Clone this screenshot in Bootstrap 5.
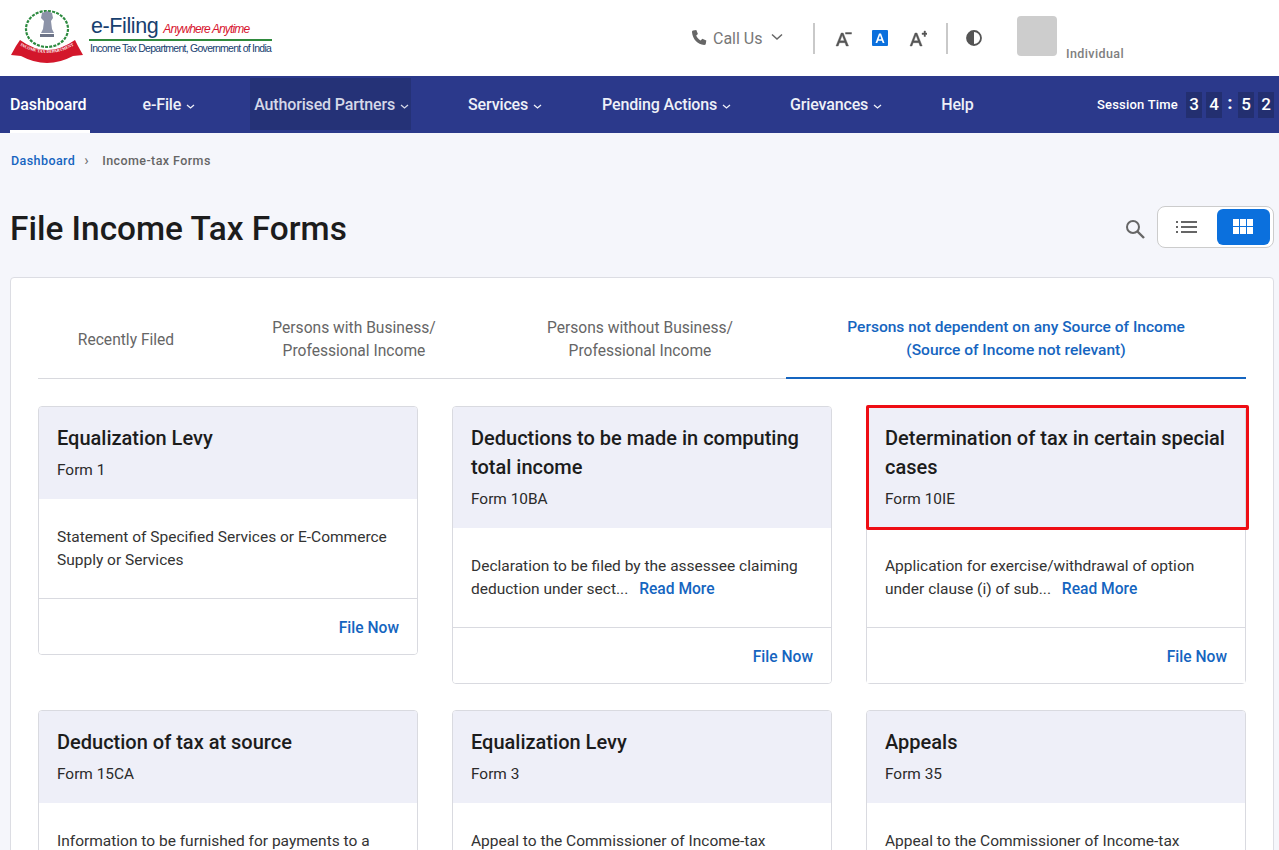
<!DOCTYPE html>
<html lang="en">
<head>
<meta charset="utf-8">
<title>File Income Tax Forms</title>
<link rel="stylesheet" href="https://cdn.jsdelivr.net/npm/bootstrap@5.3.0/dist/css/bootstrap.min.css">
<style>
html,body{height:850px;overflow:hidden}
body{background:#f5f6fb;font-family:Roboto,"Liberation Sans",sans-serif;color:#1c1c1c;font-size:15.5px}
.topbar{height:76px;background:#fff;padding-left:10px}
.logo-title{font-family:"Liberation Sans",sans-serif;line-height:1}
.logo-wrap{width:262px;height:60px}
.logo-text{width:183px;margin-left:6px;padding-top:8px}
.logo-efile{font-size:21.5px;color:#17406f;letter-spacing:-.4px;margin-left:2px}
.logo-any{font-size:12px;font-style:italic;color:#d7142e;letter-spacing:-.85px;margin-left:5px}
.logo-rule{height:2px;background:#2f8a3d;margin-top:1px}
.logo-dept{font-size:10.5px;color:#17406f;letter-spacing:-.74px;margin-top:2px;margin-left:1px;white-space:nowrap}
.tools{margin-left:auto;height:76px;color:#666}
.callus{width:122px;color:#777;font-size:16px}
.callus span{margin:2px 8px 0 5px;line-height:20px}
.callus svg:last-child{margin-top:-3px}
.vsep{width:2px;height:31px;background:#c9c9c9}
.avatar-box{width:40px;height:40px;background:#cdcdcd;border-radius:4px;margin:0 0 4px 35px}
.role{font-size:12.5px;font-weight:500;color:#808080;letter-spacing:.4px;margin:33px 0 0 9px;width:213px}
.mainnav{height:57px;background:#2b398b;flex-wrap:nowrap}
.mainnav.navbar-expand .navbar-nav .nav-link{color:#eef0f8;font-weight:500;font-size:16px;padding:0 2px 0 4px;line-height:54px;height:52px;margin-top:2px;white-space:nowrap;letter-spacing:-.15px}
.mainnav .nav-item{margin-right:53px}
.mainnav .nav-item.first{margin-left:10px;margin-right:49px}
.mainnav .nav-item.wider{margin-right:54px}
.mainnav.navbar-expand .navbar-nav .nav-link.current{color:#fff;border-bottom:3px solid #fff;height:55px;padding:0 3px 0 0;letter-spacing:-.1px}
.mainnav.navbar-expand .navbar-nav .nav-link.hovered{background:#253277;color:#d5d8e8}
.care{display:inline-block;margin-left:5px;vertical-align:1px}
.session{margin-left:auto;margin-right:5px;color:#fff;font-size:13px;gap:4px}
.session b{margin-right:4px;font-weight:500;letter-spacing:.2px}
.digit{width:16px;height:26px;background:#232f70;color:#fff;font-weight:500;font-size:17px;line-height:25px;text-align:center}
.colon{width:8px;text-align:center;font-size:19px;line-height:20px;font-weight:700;margin-top:-5px}
.crumbs{font-size:12.5px;font-weight:500;letter-spacing:.42px;padding:20px 10px 0 11px;height:75px;line-height:15px}
.crumbs a{color:#1565c0;text-decoration:none}
.crumbs .crumb-sep{color:#777;margin:0 13px 0 9px;font-size:15px}
.crumbs .crumb-now{color:#666}
.page-head{padding:0 5px 0 10px;height:69px}
.page-title{font-size:33.4px;font-weight:500;color:#1c1c1c;margin:0;line-height:42px}
.view-side{margin-top:-2px}
.view-toggle{width:117px;height:42px;background:#fff;border:1px solid #ccc;border-radius:8px;padding:2px 3px 2px 2px;margin-left:11px}
.view-off{width:54px}
.view-on{width:54px;background:#0b70dd;border-radius:6px;margin-left:3px}
.panel{margin:0 5px 0 10px;background:#fff;border:1px solid #dcdde3;border-radius:4px;padding:27px 27px 0;height:700px}
.tabstrip{height:74px;border-bottom:1px solid #d8d9de;margin-bottom:27px;flex-wrap:nowrap;text-align:center}
.tabstrip .tabitem{color:#666;line-height:23px;font-size:15.6px;padding:0 0 4px;border-radius:0;display:flex;align-items:center;justify-content:center;height:74px}
.tab-a{width:176px}.tab-b{width:280px}.tab-c{width:292px}.tab-d{width:460px}
.tabstrip .tabitem.active-tab{color:#1565c0;font-weight:500;border-bottom:2px solid #1565c0;padding-bottom:4px;font-size:15.55px}
.cards{--bs-gutter-x:34px;--bs-gutter-y:26.4px}
.fcard{border:1px solid #d9dae0;border-radius:4px;--bs-card-inner-border-radius:3px}
.fhead{background:#eeeff8;border:0;padding:17px 18px 17px}
.ftitle{font-size:20px;font-weight:500;line-height:29px;color:#1c1c1c;margin:0}
.fform{font-size:15.4px;line-height:23px;margin-top:6px;color:#2a2a2a}
.fbody{padding:27px 18px 26px;line-height:23px;color:#333}
.fbody a,.ffoot a{color:#1565c0;font-weight:500;text-decoration:none;font-size:15.6px}
.fbody a{margin-left:7px}
.ffoot{background:#fff;border-top:1px solid #d9dae0;padding:18px 18px 0;text-align:right;line-height:23px;height:56px}
.mark-box{position:absolute;left:-1px;top:-2px;width:383px;height:125px;border:3px solid #ee0d14;border-radius:2px;pointer-events:none}
</style>
</head>
<body>
<header class="topbar d-flex align-items-center">
  <div class="logo-wrap d-flex">
    <svg width="73" height="60" viewBox="0 0 73 60" aria-hidden="true">
      <ellipse cx="37" cy="21" rx="21" ry="18" fill="none" stroke="#2c8a3f" stroke-width="2.200" stroke-dasharray="3 1.200"/>
      <path d="M32 5l5-2 5 2 1 5-2 3 1 8 2 4H31l2-4 1-8-3-3z" fill="#8c93a8"/>
      <path d="M30 26h14v3H30z" fill="#6d7488"/>
      <path d="M10 32Q37 52 65 32L68 38 73 47 63 48Q37 62 11 48L1 47 6 38Z" fill="#d3172b"/>
      <path id="ribbon-line" d="M2 32Q37 58 72 32" fill="none"/>
      <text font-family="Liberation Serif" font-size="4.100" font-weight="700" fill="#fff"><textPath href="#ribbon-line" startOffset="50%" text-anchor="middle">INCOME TAX DEPARTMENT</textPath></text>
    </svg>
    <div class="logo-text logo-title">
      <div><span class="logo-efile">e-Filing</span><span class="logo-any">Anywhere Anytime</span></div>
      <div class="logo-rule"></div>
      <div class="logo-dept">Income Tax Department, Government of India</div>
    </div>
  </div>
  <div class="tools d-flex align-items-center">
    <div class="callus d-flex align-items-center">
      <svg width="17" height="18" viewBox="0 0 17 18" aria-hidden="true"><path d="M2 1.500 5.300 1l1.600 4-1.700 1.600c.8 2.200 2.300 3.800 4.500 4.800l1.600-1.700 4 1.700-.5 3.300c-.2.800-.8 1.300-1.600 1.200C6.500 15.500 1.700 10 1 3.200 1 2.400 1.300 1.700 2 1.500z" fill="#666"/></svg>
      <span>Call Us</span>
      <svg width="12" height="8" viewBox="0 0 12 8" aria-hidden="true"><path d="M1 1.500 6 6l5-4.500" fill="none" stroke="#666" stroke-width="1.500"/></svg>
    </div>
    <div class="vsep"></div>
    <svg style="margin-left:20px" width="17" height="17" viewBox="0 0 17 17" aria-hidden="true"><path d="M1 16 6.200 3h2L13.500 16h-2.300l-1.200-3.300H4.400L3.200 16zM5.100 10.800h4.200L7.200 5.200zM10.500 2.500h6v1.600h-6z" fill="#555" stroke="#555" stroke-width=".4"/></svg>
    <svg style="margin-left:20px" width="16" height="16" viewBox="0 0 16 16" aria-hidden="true"><rect width="16" height="16" rx="1" fill="#0b70dd"/><path d="M3.500 13 7 3.500h2L12.500 13h-1.800l-.8-2.300H6.100L5.300 13zM6.600 9.200h2.800L8 5.300z" fill="#fff"/></svg>
    <svg style="margin-left:21px" width="18" height="17" viewBox="0 0 18 17" aria-hidden="true"><path d="M1 16 6 3h2l5.200 13H11l-1.200-3.300H4.200L3 16zM4.900 10.800h4.200L7 5.200zM13 3h2V1h1.500v2H18v1.500h-1.500v2H15v-2h-2z" fill="#555" stroke="#555" stroke-width=".4"/></svg>
    <div class="vsep" style="margin-left:19px"></div>
    <svg style="margin-left:18px" width="16" height="16" viewBox="0 0 16 16" aria-hidden="true"><circle cx="8" cy="8" r="7" fill="#fff" stroke="#555" stroke-width="1.800"/><path d="M8 1a7 7 0 0 0 0 14z" fill="#555"/></svg>
    <div class="avatar-box"></div>
    <div class="role">Individual</div>
  </div>
</header>
<nav class="mainnav navbar navbar-expand p-0 d-flex align-items-start">
  <ul class="navbar-nav">
    <li class="nav-item first"><a class="nav-link current" href="#">Dashboard</a></li>
    <li class="nav-item"><a class="nav-link" href="#">e-File<svg class="care" width="9" height="5" viewBox="0 0 9 5"><path d="M1 1l3.500 3L8 1" fill="none" stroke="#eef0f8" stroke-width="1.300"/></svg></a></li>
    <li class="nav-item"><a class="nav-link hovered" href="#">Authorised Partners<svg class="care" width="9" height="5" viewBox="0 0 9 5"><path d="M1 1l3.500 3L8 1" fill="none" stroke="#d5d8e8" stroke-width="1.300"/></svg></a></li>
    <li class="nav-item wider"><a class="nav-link" href="#">Services<svg class="care" width="9" height="5" viewBox="0 0 9 5"><path d="M1 1l3.500 3L8 1" fill="none" stroke="#eef0f8" stroke-width="1.300"/></svg></a></li>
    <li class="nav-item"><a class="nav-link" href="#">Pending Actions<svg class="care" width="9" height="5" viewBox="0 0 9 5"><path d="M1 1l3.500 3L8 1" fill="none" stroke="#eef0f8" stroke-width="1.300"/></svg></a></li>
    <li class="nav-item"><a class="nav-link" href="#">Grievances<svg class="care" width="9" height="5" viewBox="0 0 9 5"><path d="M1 1l3.500 3L8 1" fill="none" stroke="#eef0f8" stroke-width="1.300"/></svg></a></li>
    <li class="nav-item"><a class="nav-link" href="#">Help</a></li>
  </ul>
  <div class="session d-flex align-items-center mt-3">
    <b>Session Time</b>
    <span class="digit">3</span><span class="digit">4</span><span class="colon">:</span><span class="digit">5</span><span class="digit">2</span>
  </div>
</nav>
<div class="crumbs"><a href="#">Dashboard</a><span class="crumb-sep">›</span><span class="crumb-now">Income-tax Forms</span></div>
<div class="page-head d-flex justify-content-between align-items-start">
  <h1 class="page-title">File Income Tax Forms</h1>
  <div class="view-side d-flex align-items-center">
    <svg class="mt-1" width="22" height="22" viewBox="0 0 22 22" aria-hidden="true"><circle cx="9" cy="9" r="6" fill="none" stroke="#666" stroke-width="2"/><path d="M13.500 13.500 20 20" stroke="#666" stroke-width="2.400"/></svg>
    <div class="view-toggle d-flex">
      <div class="view-off d-flex align-items-center justify-content-center"><svg width="22" height="13" viewBox="0 0 22 13" aria-hidden="true"><path d="M0 0h2v2H0zM0 5h2v2H0zM0 10h2v2H0zM5 0h16v2H5zM5 5h16v2H5zM5 10h16v2H5z" fill="#666"/></svg></div>
      <div class="view-on d-flex align-items-center justify-content-center"><svg width="20" height="16" viewBox="0 0 20 16" aria-hidden="true"><path d="M0 0h6v7H0zM7 0h6v7H7zM14 0h6v7h-6zM0 8h6v7H0zM7 8h6v7H7zM14 8h6v7h-6z" fill="#fff"/></svg></div>
    </div>
  </div>
</div>
<main class="panel">
  <ul class="tabstrip nav">
    <li class="nav-item tab-a"><a class="tabitem nav-link" href="#">Recently Filed</a></li>
    <li class="nav-item tab-b"><a class="tabitem nav-link" href="#">Persons with Business/<br>Professional Income</a></li>
    <li class="nav-item tab-c"><a class="tabitem nav-link" href="#">Persons without Business/<br>Professional Income</a></li>
    <li class="nav-item tab-d"><a class="tabitem nav-link active-tab" href="#">Persons not dependent on any Source of Income<br>(Source of Income not relevant)</a></li>
  </ul>
  <div class="row cards align-items-start">
    <div class="col-4"><div class="card fcard">
      <div class="card-header fhead"><h2 class="ftitle">Equalization Levy</h2><div class="fform">Form 1</div></div>
      <div class="card-body fbody">Statement of Specified Services or E-Commerce Supply or Services</div>
      <div class="card-footer ffoot"><a href="#">File Now</a></div>
    </div></div>
    <div class="col-4"><div class="card fcard">
      <div class="card-header fhead"><h2 class="ftitle">Deductions to be made in computing total income</h2><div class="fform">Form 10BA</div></div>
      <div class="card-body fbody"><div>Declaration to be filed by the assessee claiming</div><div><span>deduction under sect...</span> <a href="#">Read More</a></div></div>
      <div class="card-footer ffoot"><a href="#">File Now</a></div>
    </div></div>
    <div class="col-4"><div class="card fcard">
      <div class="card-header fhead"><h2 class="ftitle">Determination of tax in certain special cases</h2><div class="fform">Form 10IE</div></div>
      <div class="card-body fbody"><div>Application for exercise/withdrawal of option</div><div><span>under clause (i) of sub...</span> <a href="#">Read More</a></div></div>
      <div class="card-footer ffoot"><a href="#">File Now</a></div>
      <div class="mark-box"></div>
    </div></div>
    <div class="col-4"><div class="card fcard">
      <div class="card-header fhead"><h2 class="ftitle">Deduction of tax at source</h2><div class="fform">Form 15CA</div></div>
      <div class="card-body fbody">Information to be furnished for payments to a</div>
    </div></div>
    <div class="col-4"><div class="card fcard">
      <div class="card-header fhead"><h2 class="ftitle">Equalization Levy</h2><div class="fform">Form 3</div></div>
      <div class="card-body fbody">Appeal to the Commissioner of Income-tax</div>
    </div></div>
    <div class="col-4"><div class="card fcard">
      <div class="card-header fhead"><h2 class="ftitle">Appeals</h2><div class="fform">Form 35</div></div>
      <div class="card-body fbody">Appeal to the Commissioner of Income-tax</div>
    </div></div>
  </div>
</main>
<script src="https://cdn.jsdelivr.net/npm/bootstrap@5.3.0/dist/js/bootstrap.bundle.min.js"></script>
</body>
</html>
